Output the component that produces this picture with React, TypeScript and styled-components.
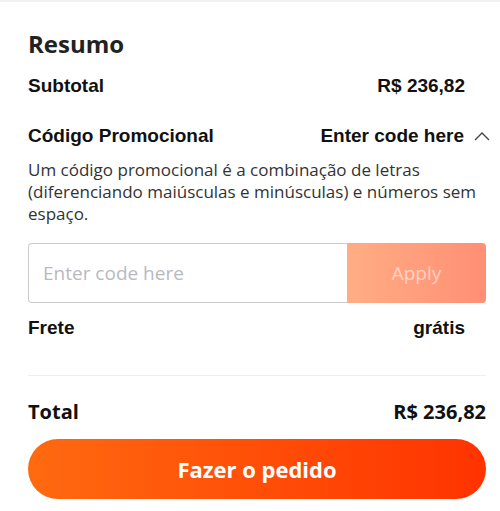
import React from 'react';
import styled, { createGlobalStyle } from 'styled-components';

const GlobalStyle = createGlobalStyle`
  html, body {
    margin: 0;
    padding: 0;
    background: #fff;
  }
`;

const Panel = styled.div`
  width: 500px;
  height: 511px;
  box-sizing: border-box;
  border-top: 2px solid #f2f2f2;
  padding: 26px 14px 0 28px;
  font-family: "Open Sans", sans-serif;
  color: #222;
  overflow: hidden;
`;

const Title = styled.h2`
  margin: 0;
  font-size: 24px;
  font-weight: 700;
  line-height: 32px;
`;

const Row = styled.div<{ $inset?: boolean; $top: number }>`
  display: flex;
  justify-content: space-between;
  align-items: center;
  margin-top: ${({ $top }) => $top}px;
  padding-right: ${({ $inset }) => ($inset ? 21 : 0)}px;
`;

const Label = styled.span`
  font-family: "Liberation Sans", Arial, sans-serif;
  font-weight: 700;
  font-size: 19px;
  line-height: 22px;
  color: #111;
`;

const BigLabel = styled.span`
  font-family: "Open Sans", sans-serif;
  font-weight: 700;
  font-size: 20px;
  line-height: 26px;
  color: #111;
`;

const Toggle = styled.span`
  display: flex;
  align-items: center;
  gap: 10px;
  margin-right: -4px;
`;

const Hint = styled.p`
  margin: 12px 0 0;
  font-size: 17px;
  line-height: 22px;
  color: #333;
`;

const CodeForm = styled.div`
  display: flex;
  height: 60px;
  margin-top: 18px;
`;

const CodeInput = styled.input`
  flex: 1;
  min-width: 0;
  box-sizing: border-box;
  border: 1px solid #ccc;
  border-right: none;
  border-radius: 4px 0 0 4px;
  padding: 0 14px;
  font-family: "Open Sans", sans-serif;
  font-size: 19px;
  outline: none;
  &::placeholder {
    color: #b9b9bf;
  }
`;

const ApplyButton = styled.button`
  width: 139px;
  border: none;
  border-radius: 0 4px 4px 0;
  background: linear-gradient(90deg, #ffad84, #ff8f75);
  color: rgba(255, 255, 255, 0.55);
  font-family: "Open Sans", sans-serif;
  font-size: 19px;
`;

const Divider = styled.hr`
  border: none;
  border-top: 1px solid #eee;
  margin: 36px 0 0;
`;

const OrderButton = styled.button`
  display: block;
  width: 100%;
  height: 60px;
  margin-top: 14px;
  border: none;
  border-radius: 30px;
  background: linear-gradient(90deg, #ff6a10, #ff3300);
  color: #fff;
  font-family: "Open Sans", sans-serif;
  font-weight: 700;
  font-size: 22px;
`;

const Chevron = () => (
  <svg width="16" height="10" viewBox="0 0 16 10" fill="none">
    <path d="M1 9 L8 2 L15 9" stroke="#444" strokeWidth="1.4" />
  </svg>
);

const App = () => (
  <>
    <GlobalStyle />
    <Panel>
      <Title>Resumo</Title>
      <Row $inset $top={15}>
        <Label>Subtotal</Label>
        <Label>R$ 236,82</Label>
      </Row>
      <Row $top={28}>
        <Label>Código Promocional</Label>
        <Toggle>
          <Label>Enter code here</Label>
          <Chevron />
        </Toggle>
      </Row>
      <Hint>
        Um código promocional é a combinação de letras (diferenciando maiúsculas e minúsculas) e números sem
        espaço.
      </Hint>
      <CodeForm>
        <CodeInput placeholder="Enter code here" />
        <ApplyButton>Apply</ApplyButton>
      </CodeForm>
      <Row $inset $top={14}>
        <Label>Frete</Label>
        <Label>grátis</Label>
      </Row>
      <Divider />
      <Row $top={23}>
        <BigLabel>Total</BigLabel>
        <BigLabel>R$ 236,82</BigLabel>
      </Row>
      <OrderButton>Fazer o pedido</OrderButton>
    </Panel>
  </>
);

export default App;
